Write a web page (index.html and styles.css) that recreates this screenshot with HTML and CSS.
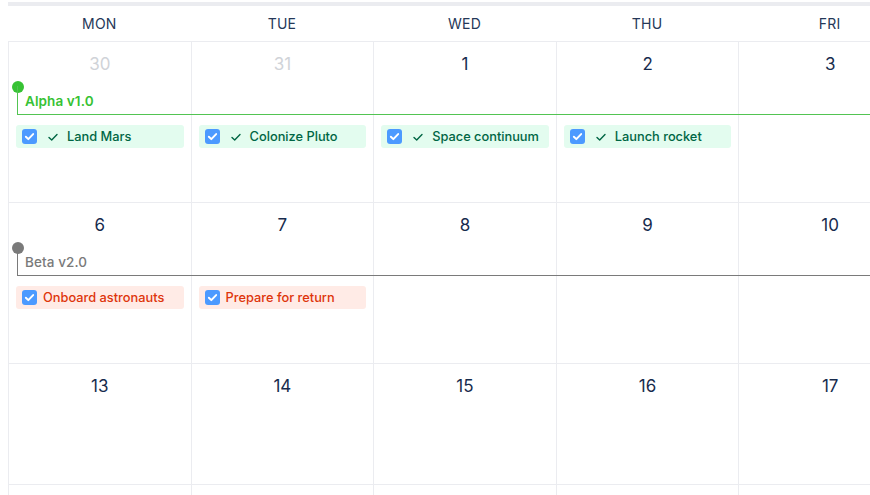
FILE: index.html
```html
<!DOCTYPE html>
<html>
<head>
<meta charset="utf-8">
<link rel="stylesheet" href="styles.css">
</head>
<body>
<div class="cal">
  <div class="topbar"></div>
  <div class="head">
    <div class="hd">MON</div><div class="hd">TUE</div><div class="hd">WED</div><div class="hd">THU</div><div class="hd">FRI</div>
  </div>
  <div class="week">
    <div class="cell"><div class="num muted">30</div><div class="space"></div>
      <div class="chip done"><span class="cb"><svg viewBox="0 0 14 14"><path d="M3.6 7.2l2.3 2.3 4.5-4.8" fill="none" stroke="#fff" stroke-width="1.8" stroke-linecap="round" stroke-linejoin="round"/></svg></span><svg class="tick" viewBox="0 0 12 12"><path d="M2 6.4l2.7 2.6L10 3.6" fill="none" stroke="currentColor" stroke-width="1.4" stroke-linecap="round" stroke-linejoin="round"/></svg><span>Land Mars</span></div></div>
    <div class="cell"><div class="num muted">31</div><div class="space"></div>
      <div class="chip done"><span class="cb"><svg viewBox="0 0 14 14"><path d="M3.6 7.2l2.3 2.3 4.5-4.8" fill="none" stroke="#fff" stroke-width="1.8" stroke-linecap="round" stroke-linejoin="round"/></svg></span><svg class="tick" viewBox="0 0 12 12"><path d="M2 6.4l2.7 2.6L10 3.6" fill="none" stroke="currentColor" stroke-width="1.4" stroke-linecap="round" stroke-linejoin="round"/></svg><span>Colonize Pluto</span></div></div>
    <div class="cell"><div class="num">1</div><div class="space"></div>
      <div class="chip done"><span class="cb"><svg viewBox="0 0 14 14"><path d="M3.6 7.2l2.3 2.3 4.5-4.8" fill="none" stroke="#fff" stroke-width="1.8" stroke-linecap="round" stroke-linejoin="round"/></svg></span><svg class="tick" viewBox="0 0 12 12"><path d="M2 6.4l2.7 2.6L10 3.6" fill="none" stroke="currentColor" stroke-width="1.4" stroke-linecap="round" stroke-linejoin="round"/></svg><span>Space continuum</span></div></div>
    <div class="cell"><div class="num">2</div><div class="space"></div>
      <div class="chip done"><span class="cb"><svg viewBox="0 0 14 14"><path d="M3.6 7.2l2.3 2.3 4.5-4.8" fill="none" stroke="#fff" stroke-width="1.8" stroke-linecap="round" stroke-linejoin="round"/></svg></span><svg class="tick" viewBox="0 0 12 12"><path d="M2 6.4l2.7 2.6L10 3.6" fill="none" stroke="currentColor" stroke-width="1.4" stroke-linecap="round" stroke-linejoin="round"/></svg><span>Launch rocket</span></div></div>
    <div class="cell"><div class="num">3</div></div>
    <div class="milestone green"><span class="dot"></span><div class="line"><span class="label">Alpha v1.0</span></div></div>
  </div>
  <div class="week">
    <div class="cell"><div class="num">6</div><div class="space"></div>
      <div class="chip todo"><span class="cb"><svg viewBox="0 0 14 14"><path d="M3.6 7.2l2.3 2.3 4.5-4.8" fill="none" stroke="#fff" stroke-width="1.8" stroke-linecap="round" stroke-linejoin="round"/></svg></span><span>Onboard astronauts</span></div></div>
    <div class="cell"><div class="num">7</div><div class="space"></div>
      <div class="chip todo"><span class="cb"><svg viewBox="0 0 14 14"><path d="M3.6 7.2l2.3 2.3 4.5-4.8" fill="none" stroke="#fff" stroke-width="1.8" stroke-linecap="round" stroke-linejoin="round"/></svg></span><span>Prepare for return</span></div></div>
    <div class="cell"><div class="num">8</div></div>
    <div class="cell"><div class="num">9</div></div>
    <div class="cell"><div class="num">10</div></div>
    <div class="milestone gray"><span class="dot"></span><div class="line"><span class="label">Beta v2.0</span></div></div>
  </div>
  <div class="week short">
    <div class="cell"><div class="num">13</div></div>
    <div class="cell"><div class="num">14</div></div>
    <div class="cell"><div class="num">15</div></div>
    <div class="cell"><div class="num">16</div></div>
    <div class="cell"><div class="num">17</div></div>
  </div>
  <div class="week">
    <div class="cell"></div><div class="cell"></div><div class="cell"></div><div class="cell"></div><div class="cell"></div>
  </div>
</div>
</body>
</html>
```
FILE: styles.css
```css
html, body { margin: 0; padding: 0; background: #fff; overflow: hidden; }
body { width: 870px; height: 495px; font-family: Inter, "Noto Sans", "Liberation Sans", sans-serif; color: #172b4d; }
.cal { padding-left: 8px; width: 914px; }
.topbar { height: 4px; margin-top: 2px; background: #ebecf0; }
.head { display: grid; grid-template-columns: repeat(5, 182.6px); height: 35px; border-bottom: 1px solid #ebecf0; }
.hd { text-align: center; font-size: 14px; line-height: 36px; color: #253858; letter-spacing: 0.2px; }
.week { position: relative; display: grid; grid-template-columns: repeat(5, 182.6px); border-left: 1px solid #ebecf0; }
.cell { box-sizing: border-box; height: 161px; border-right: 1px solid #ebecf0; border-bottom: 1px solid #ebecf0; padding: 0 7px; }
.week.short .cell { height: 121px; }
.num { text-align: center; font-size: 17px; line-height: 20px; padding-top: 12px; color: #172b4d; }
.num.muted { color: #d0d3d8; }
.space { height: 51px; }
.chip { display: flex; align-items: center; height: 23px; border-radius: 3px; padding-left: 6px; font-size: 12.8px; font-weight: 500; white-space: nowrap; }
.chip.done { background: #e3fcef; color: #006644; }
.chip.todo { background: #ffebe6; color: #de350b; }
.cb { width: 15px; height: 15px; border-radius: 3px; background: #4c9aff; display: flex; margin-right: 6px; flex: none; }
.cb svg { width: 15px; height: 15px; }
.tick { width: 12px; height: 12px; margin: 0 8px 0 4px; flex: none; }
.milestone { position: absolute; left: 2px; right: 0; top: 39px; }
.dot { position: absolute; left: 1px; top: 0; width: 12px; height: 12px; border-radius: 50%; }
.line { margin-left: 6px; margin-top: 5px; height: 28px; border-left: 1px solid; border-bottom: 1px solid; position: relative; }
.label { position: absolute; left: 7px; top: 7px; font-size: 13.5px; font-weight: 600; letter-spacing: 0.1px; }
.green .dot { background: #37c234; }
.green .line { border-color: #52c452; }
.green .label { color: #37c234; }
.gray .dot { background: #7a7a7a; }
.gray .line { border-color: #7a7a7a; }
.gray .label { color: #7a7a7a; font-weight: 500; }
```
